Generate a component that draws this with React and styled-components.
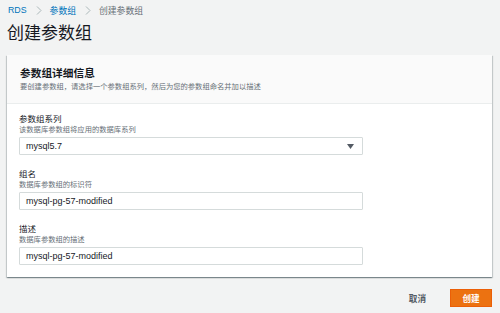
import React from "react";
import styled, { createGlobalStyle } from "styled-components";

const Global = createGlobalStyle`
  html, body { margin: 0; padding: 0; background: #f2f3f3; }
  body {
    font-family: "Liberation Sans", "Noto Sans CJK SC", sans-serif;
    color: #16191f;
  }
  * { box-sizing: border-box; }
`;

const Page = styled.div`
  width: 500px;
  height: 313px;
  padding: 0 8px 0 7px;
  background: #f2f3f3;
  overflow: hidden;
`;

const Breadcrumbs = styled.nav`
  display: flex;
  align-items: center;
  height: 20px;
  padding-left: 1px;
  font-size: 8.8px;
`;

const Crumb = styled.span`
  color: ${(p) => (p.$current ? "#687078" : "#0073bb")};
`;

const Chevron = styled.svg`
  width: 6px;
  height: 9px;
  margin: 0 8px 0 9px;
  display: block;
`;

const Title = styled.h1`
  margin: 0 0 7px 0;
  height: 28px;
  line-height: 28px;
  font-size: 17px;
  font-weight: 400;
  color: #16191f;
`;

const Card = styled.section`
  background: #fff;
  box-shadow: 0 1px 1px 0 rgba(0, 28, 36, 0.3), 1px 1px 1px 0 rgba(0, 28, 36, 0.15),
    -1px 1px 1px 0 rgba(0, 28, 36, 0.15);
`;

const CardHeader = styled.header`
  background: #fafafa;
  border-bottom: 1px solid #eaeded;
  padding: 11px 13px 10px 13px;
  height: 49px;
`;

const CardTitle = styled.h2`
  margin: 0 0 1px 0;
  font-size: 10.7px;
  line-height: 14px;
  font-weight: 700;
  color: #16191f;
`;

const CardDesc = styled.p`
  margin: 0;
  font-size: 7.3px;
  line-height: 12px;
  color: #687078;
`;

const CardBody = styled.div`
  display: flex;
  flex-direction: column;
  gap: 13px;
  padding: 9px 13px 12px 12px;
`;

const Field = styled.div`
  display: flex;
  flex-direction: column;
`;

const Label = styled.label`
  font-size: 8.5px;
  line-height: 12px;
  color: #16191f;
`;

const Hint = styled.span`
  font-size: 7.3px;
  line-height: 10px;
  color: #687078;
  margin-bottom: 2px;
`;

const Control = styled.div`
  width: 344px;
  height: 18px;
  border: 1px solid #d5dbdb;
  border-radius: 1px;
  background: #fff;
  display: flex;
  align-items: center;
  justify-content: space-between;
  padding: 0 8px 0 6px;
  font-size: 9px;
  color: #16191f;
`;

const Caret = styled.svg`
  width: 7px;
  height: 5px;
  display: block;
`;

const Actions = styled.div`
  display: flex;
  justify-content: flex-end;
  align-items: center;
  margin-top: 12px;
  gap: 24px;
`;

const TextButton = styled.span`
  font-size: 8.6px;
  color: #545b64;
  font-weight: 700;
`;

const PrimaryButton = styled.span`
  width: 42px;
  height: 18px;
  display: flex;
  align-items: center;
  justify-content: center;
  background: #ec7211;
  border: 1px solid #eb5f07;
  color: #fff;
  font-size: 8.6px;
  font-weight: 700;
`;

const Sep = () => (
  <Chevron viewBox="0 0 6 9">
    <path d="M1 0.5 L5 4.5 L1 8.5" fill="none" stroke="#aab7b8" strokeWidth="1" />
  </Chevron>
);

export default function App() {
  return (
    <Page>
      <Global />
      <Breadcrumbs>
        <Crumb>RDS</Crumb>
        <Sep />
        <Crumb>参数组</Crumb>
        <Sep />
        <Crumb $current>创建参数组</Crumb>
      </Breadcrumbs>
      <Title>创建参数组</Title>
      <Card>
        <CardHeader>
          <CardTitle>参数组详细信息</CardTitle>
          <CardDesc>要创建参数组，请选择一个参数组系列，然后为您的参数组命名并加以描述</CardDesc>
        </CardHeader>
        <CardBody>
          <Field>
            <Label>参数组系列</Label>
            <Hint>该数据库参数组将应用的数据库系列</Hint>
            <Control>
              <span>mysql5.7</span>
              <Caret viewBox="0 0 7 5">
                <path d="M0 0 H7 L3.5 5 Z" fill="#545b64" />
              </Caret>
            </Control>
          </Field>
          <Field>
            <Label>组名</Label>
            <Hint>数据库参数组的标识符</Hint>
            <Control>mysql-pg-57-modified</Control>
          </Field>
          <Field>
            <Label>描述</Label>
            <Hint>数据库参数组的描述</Hint>
            <Control>mysql-pg-57-modified</Control>
          </Field>
        </CardBody>
      </Card>
      <Actions>
        <TextButton>取消</TextButton>
        <PrimaryButton>创建</PrimaryButton>
      </Actions>
    </Page>
  );
}
